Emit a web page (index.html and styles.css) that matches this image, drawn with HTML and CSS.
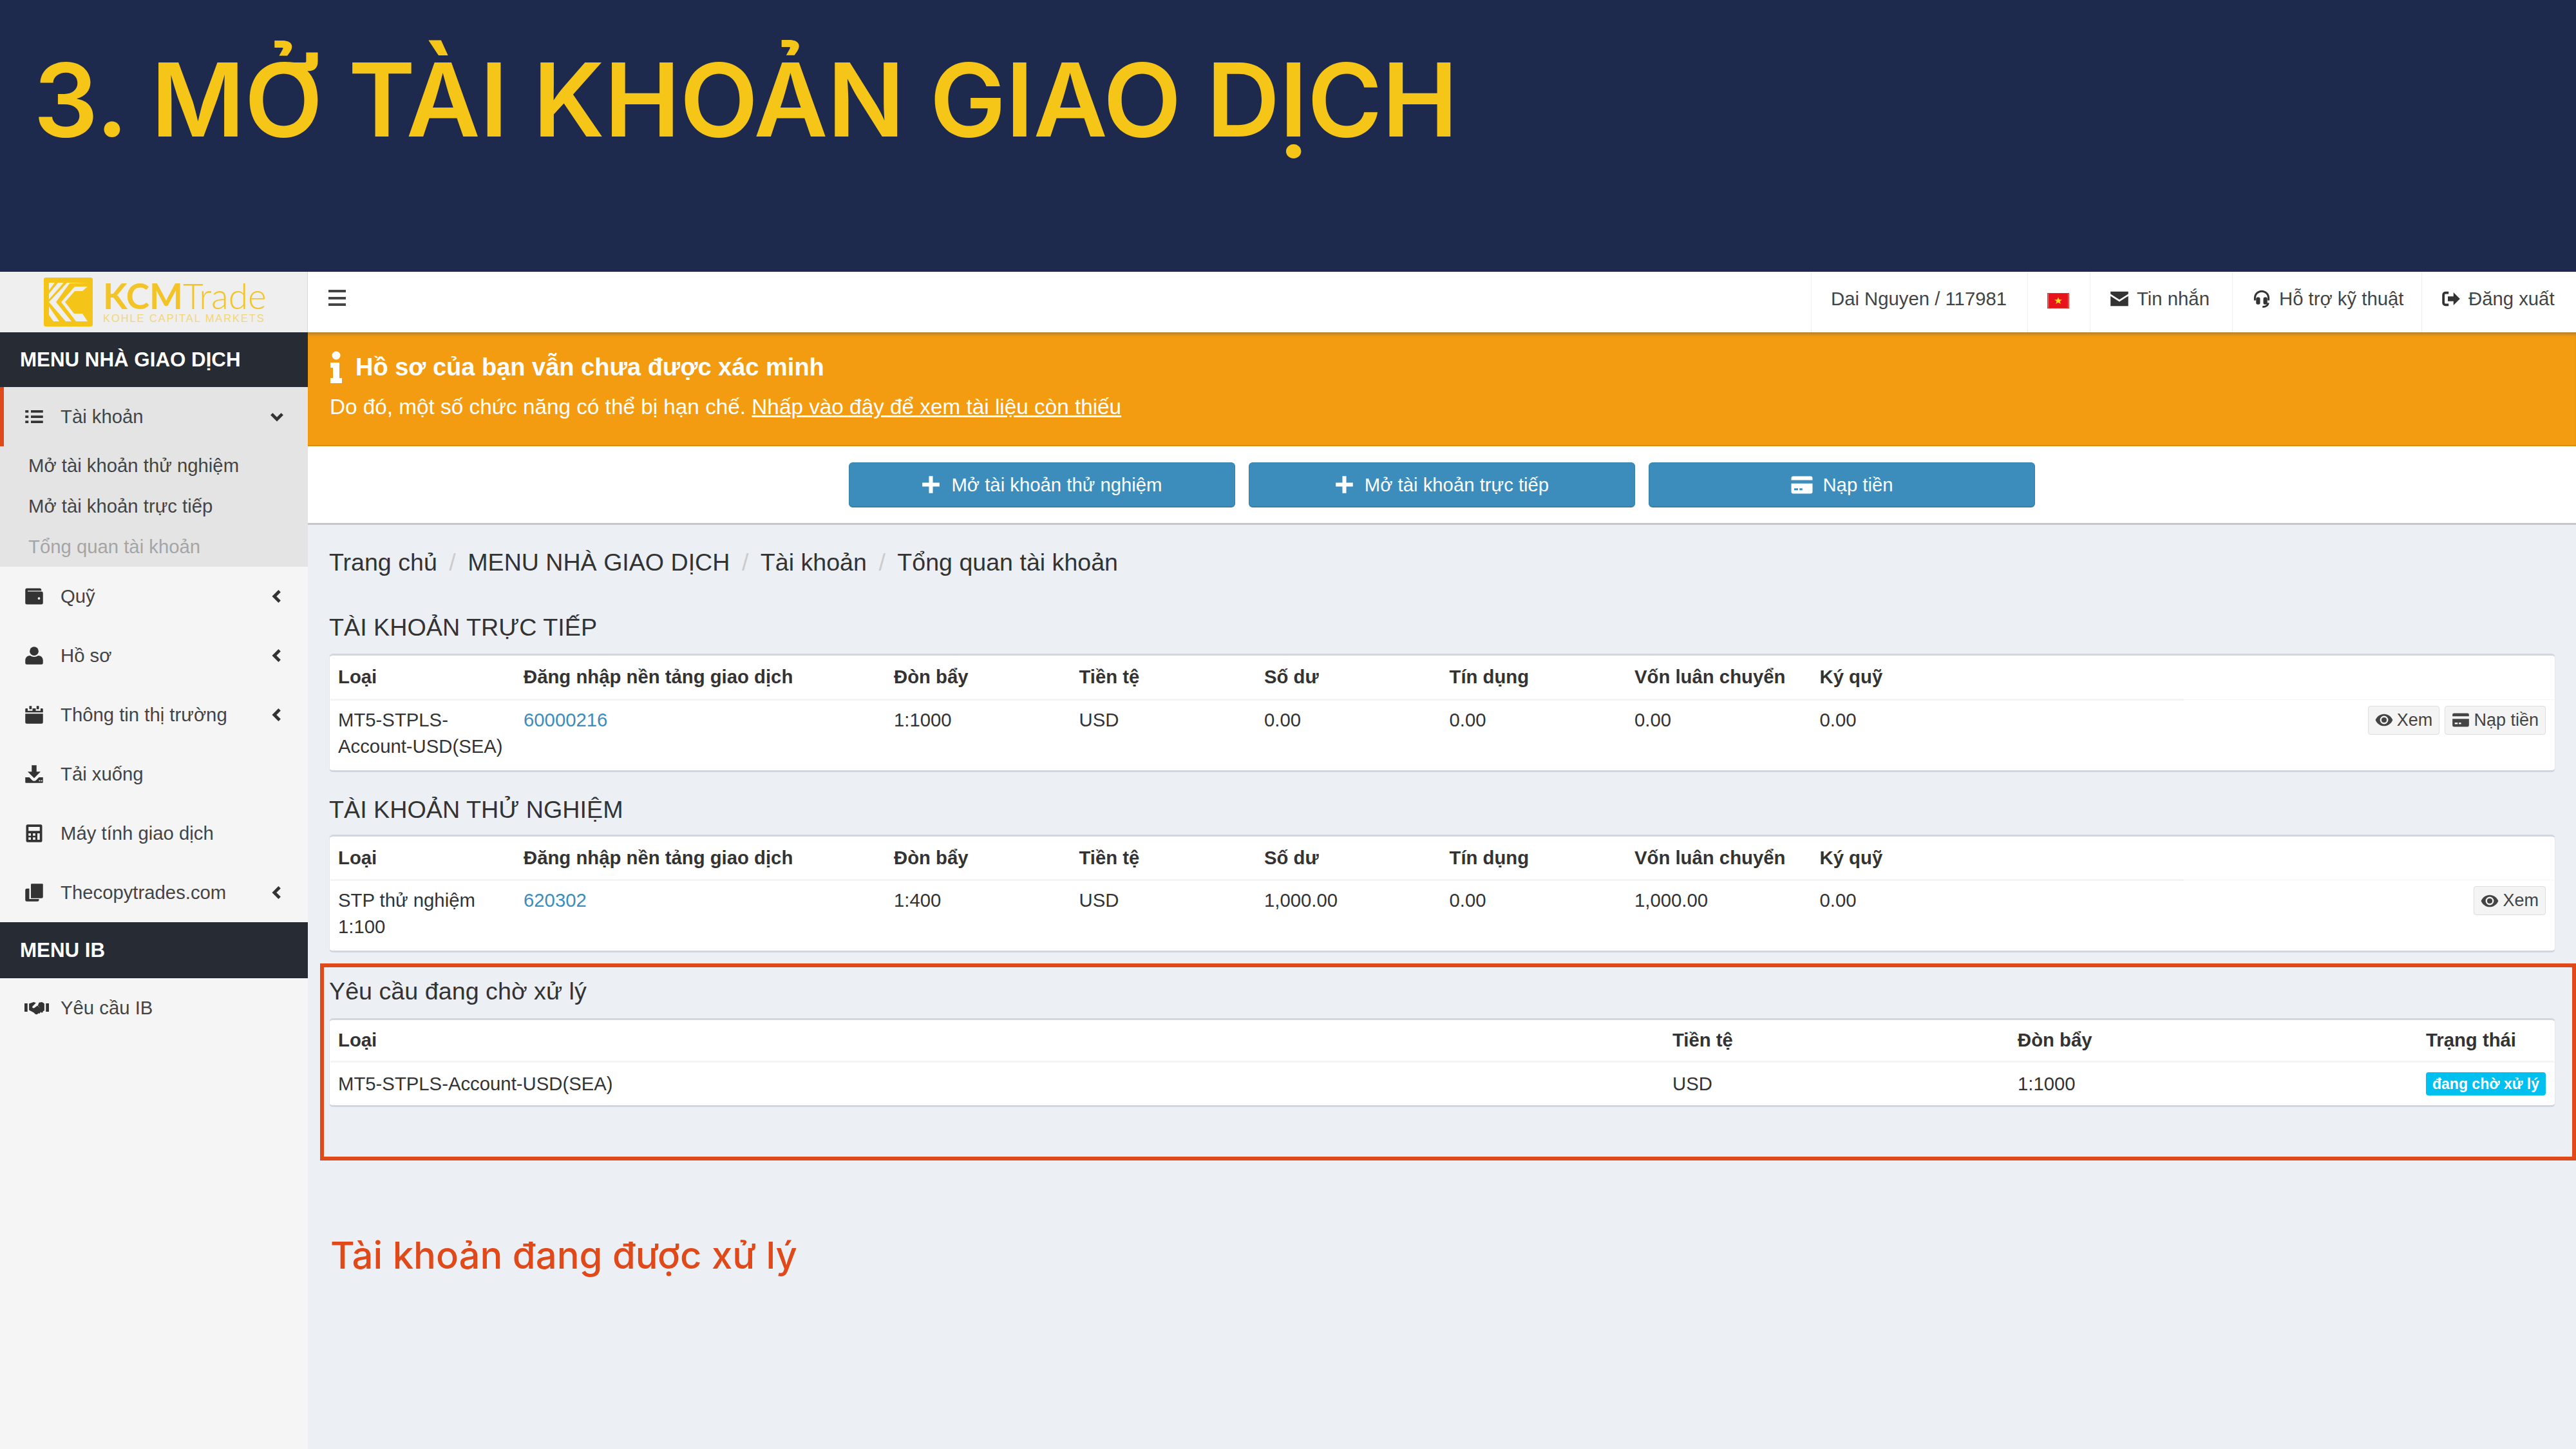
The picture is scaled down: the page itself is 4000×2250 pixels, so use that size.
FILE: index.html
```html
<!DOCTYPE html>
<html lang="vi">
<head>
    <meta charset="utf-8">
    <title>Mở tài khoản giao dịch</title>
    <link rel="stylesheet" href="styles.css">
</head>
<body>
    <svg class="icon-defs" aria-hidden="true">
        <symbol id="i-list" viewBox="0 0 24 24"><path d="M1 4h4v3H1zM8 4h15v3H8zM1 10.500h4v3H1zM8 10.500h15v3H8zM1 17h4v3H1zM8 17h15v3H8z"/></symbol>
        <symbol id="i-wallet" viewBox="0 0 24 24"><path fill-rule="evenodd" d="M3 2h16a2 2 0 0 1 2 2v1H4v1h17a2 2 0 0 1 2 2v12a2 2 0 0 1-2 2H3a2 2 0 0 1-2-2V4a2 2 0 0 1 2-2zm15 11a1.500 1.500 0 1 0 0 3 1.500 1.500 0 0 0 0-3z"/></symbol>
        <symbol id="i-user" viewBox="0 0 24 24"><circle cx="12" cy="6.500" r="5.500"/><path d="M3 23a2 2 0 0 1-2-2v-3c0-3.500 2.500-6 6-6 1.500 1 3 1.500 5 1.500s3.500-.5 5-1.500c3.500 0 6 2.500 6 6v3a2 2 0 0 1-2 2z"/></symbol>
        <symbol id="i-calendar" viewBox="0 0 24 24"><path d="M6 1h3v4H6zM15 1h3v4h-3zM2 4h2v3h6V4h4v3h6V4h2a1 1 0 0 1 1 1v4H1V5a1 1 0 0 1 1-1zM1 10.500h22V21a2 2 0 0 1-2 2H3a2 2 0 0 1-2-2z"/></symbol>
        <symbol id="i-download" viewBox="0 0 24 24"><path d="M9 1h6v8h5l-8 8-8-8h5z"/><path fill-rule="evenodd" d="M1 16h5l3.500 3.500a3.500 3.500 0 0 0 5 0L18 16h5v6a1 1 0 0 1-1 1H2a1 1 0 0 1-1-1zm17 3.500v1.500h1.500v-1.500zm2.500 0v1.500H22v-1.500z"/></symbol>
        <symbol id="i-calc" viewBox="0 0 24 24"><path fill-rule="evenodd" d="M4 1h16a2 2 0 0 1 2 2v18a2 2 0 0 1-2 2H4a2 2 0 0 1-2-2V3a2 2 0 0 1 2-2zm1 3v5h14V4zm0 8v3h3v-3zm5.500 0v3h3v-3zm5.500 0v8h3v-8zM5 17v3h3v-3zm5.500 0v3h3v-3z"/></symbol>
        <symbol id="i-copy" viewBox="0 0 24 24"><path d="M8 2a1 1 0 0 1 1-1h13a1 1 0 0 1 1 1v15a2 2 0 0 1-2 2H8z"/><path d="M1 9a2 2 0 0 1 2-2h3v13h12v1a2 2 0 0 1-2 2H3a2 2 0 0 1-2-2z"/></symbol>
        <symbol id="i-handshake" viewBox="0 0 32 24"><path d="M0 6h4v11H0zM28 6h4v11h-4zM6 6.500l6-2 3 1-4.500 4.500c-1 1.500 1 3 2.500 2l4-3 7 7c1 1.500-1 3-2 2l-1-1c0 2-2 3-3 2-1 2-3 2-4 1l-2-2-6-3zM19 5l4-.5 3 2v9l-2 1-6.500-7.500z"/></symbol>
        <symbol id="i-envelope" viewBox="0 0 24 24"><path d="M1 3h22v3L12 13 1 6zM1 8.500l11 7 11-7V21H1z"/></symbol>
        <symbol id="i-headset" viewBox="0 0 24 24"><path fill="none" stroke="currentColor" stroke-width="2.400" d="M3.500 14v-3a8.500 8.500 0 0 1 17 0v3M20 17c0 3-3 5-7 5"/><rect x="5" y="10" width="5" height="9" rx="2"/><rect x="14" y="10" width="5" height="9" rx="2"/></symbol>
        <symbol id="i-signout" viewBox="0 0 24 24"><path d="M9 3v3H5a1 1 0 0 0-1 1v10a1 1 0 0 0 1 1h4v3H5a4 4 0 0 1-4-4V7a4 4 0 0 1 4-4z"/><path d="M8 9h7V4l8 8-8 8v-5H8z"/></symbol>
        <symbol id="i-plus" viewBox="0 0 24 24"><path d="M9.500 1h5v8.500H23v5h-8.500V23h-5v-8.500H1v-5h8.500z"/></symbol>
        <symbol id="i-card" viewBox="0 0 24 24"><path fill-rule="evenodd" d="M3 3h18a2 2 0 0 1 2 2v2H1V5a2 2 0 0 1 2-2zM1 10.500h22V19a2 2 0 0 1-2 2H3a2 2 0 0 1-2-2zm3 5v2h4v-2zm5.500 0v2h3v-2z"/></symbol>
        <symbol id="i-eye" viewBox="0 0 24 24"><path fill-rule="evenodd" d="M12 4c5 0 9.500 3 11.500 8-2 5-6.500 8-11.500 8S2.500 17 .5 12C2.500 7 7 4 12 4zm0 2.500a5.500 5.500 0 1 0 0 11 5.500 5.500 0 0 0 0-11z"/><circle cx="12" cy="12" r="3.500"/></symbol>
    </svg>

    <header class="slide-head">
        <h1>3. MỞ TÀI KHOẢN GIAO DỊCH</h1>
    </header>

    <div class="app">
        <aside class="sidebar">
            <div class="logo-bar">
                <svg class="logo-mark" viewBox="0 0 76 76">
                    <rect width="76" height="76" rx="3" fill="#f4c518"/>
                    <path d="M8 8h9L8 20zM22 8h9L8 34v-9zM36 8h32L40 9 19 38l24 30H34L8 38zM48 14h20l-8 7H48L33 38l14 18h13l8 12H50L27 38z" fill="#efefef"/>
                    <path d="M8 45l16 23h-9L8 58z" fill="#efefef"/>
                </svg>
                <div class="logo-text">
                    <div class="logo-name"><b>KCM</b>Trade</div>
                    <div class="logo-sub">KOHLE CAPITAL MARKETS</div>
                </div>
            </div>

            <div class="menu-head">MENU NHÀ GIAO DỊCH</div>
            <div class="menu-group">
                <a class="menu-item is-active">
                    <svg class="menu-icon"><use href="#i-list"/></svg>
                    <span class="menu-label">Tài khoản</span>
                    <svg class="chev" viewBox="0 0 16 16"><path d="M2 5l6 6 6-6"/></svg>
                </a>
                <a class="sub-item">Mở tài khoản thử nghiệm</a>
                <a class="sub-item">Mở tài khoản trực tiếp</a>
                <a class="sub-item is-current">Tổng quan tài khoản</a>
            </div>
            <a class="menu-item">
                <svg class="menu-icon"><use href="#i-wallet"/></svg>
                <span class="menu-label">Quỹ</span>
                <svg class="chev" viewBox="0 0 16 16"><path d="M11 2L5 8l6 6"/></svg>
            </a>
            <a class="menu-item">
                <svg class="menu-icon"><use href="#i-user"/></svg>
                <span class="menu-label">Hồ sơ</span>
                <svg class="chev" viewBox="0 0 16 16"><path d="M11 2L5 8l6 6"/></svg>
            </a>
            <a class="menu-item">
                <svg class="menu-icon"><use href="#i-calendar"/></svg>
                <span class="menu-label">Thông tin thị trường</span>
                <svg class="chev" viewBox="0 0 16 16"><path d="M11 2L5 8l6 6"/></svg>
            </a>
            <a class="menu-item">
                <svg class="menu-icon"><use href="#i-download"/></svg>
                <span class="menu-label">Tải xuống</span>
            </a>
            <a class="menu-item">
                <svg class="menu-icon"><use href="#i-calc"/></svg>
                <span class="menu-label">Máy tính giao dịch</span>
            </a>
            <a class="menu-item">
                <svg class="menu-icon"><use href="#i-copy"/></svg>
                <span class="menu-label">Thecopytrades.com</span>
                <svg class="chev" viewBox="0 0 16 16"><path d="M11 2L5 8l6 6"/></svg>
            </a>
            <div class="menu-head menu-head-ib">MENU IB</div>
            <a class="menu-item">
                <svg class="menu-icon menu-icon-wide"><use href="#i-handshake"/></svg>
                <span class="menu-label">Yêu cầu IB</span>
            </a>
        </aside>

        <main class="main">
            <nav class="topbar">
                <div class="burger"><i></i><i></i><i></i></div>
                <div class="top-cell cell-user">Dai Nguyen / 117981</div>
                <div class="top-cell cell-flag">
                    <svg class="flag" viewBox="0 0 34 24">
                        <rect width="34" height="24" fill="#e8141c"/>
                        <path d="M17 6l1.800 4.200h4.600l-3.700 2.800 1.400 4.500-4.100-2.700-4.100 2.700 1.400-4.500-3.700-2.800h4.600z" fill="#f7e214"/>
                    </svg>
                </div>
                <div class="top-cell cell-msg"><svg class="top-icon"><use href="#i-envelope"/></svg>Tin nhắn</div>
                <div class="top-cell cell-help"><svg class="top-icon"><use href="#i-headset"/></svg>Hỗ trợ kỹ thuật</div>
                <div class="top-cell cell-out"><svg class="top-icon"><use href="#i-signout"/></svg>Đăng xuất</div>
            </nav>

            <section class="alert">
                <h4>
                    <svg class="alert-icon" viewBox="0 0 20 50"><circle cx="10" cy="7" r="6.500"/><path d="M1 18h14v24h4v8H1v-8h4V26H1z"/></svg>
                    Hồ sơ của bạn vẫn chưa được xác minh
                </h4>
                <p>Do đó, một số chức năng có thể bị hạn chế. <a>Nhấp vào đây để xem tài liệu còn thiếu</a></p>
            </section>

            <div class="action-bar">
                <a class="btn-primary"><svg class="btn-icon"><use href="#i-plus"/></svg>Mở tài khoản thử nghiệm</a>
                <a class="btn-primary"><svg class="btn-icon"><use href="#i-plus"/></svg>Mở tài khoản trực tiếp</a>
                <a class="btn-primary"><svg class="btn-icon btn-icon-card"><use href="#i-card"/></svg>Nạp tiền</a>
            </div>

            <div class="content">
                <ol class="crumbs">
                    <li>Trang chủ</li>
                    <li>MENU NHÀ GIAO DỊCH</li>
                    <li>Tài khoản</li>
                    <li>Tổng quan tài khoản</li>
                </ol>

                <h3 class="section-title">TÀI KHOẢN TRỰC TIẾP</h3>
                <div class="box">
                    <table class="acc-table">
                        <thead>
                            <tr>
                                <th class="col-type">Loại</th>
                                <th class="col-login">Đăng nhập nền tảng giao dịch</th>
                                <th class="col-num">Đòn bẩy</th>
                                <th class="col-num">Tiền tệ</th>
                                <th class="col-num">Số dư</th>
                                <th class="col-num">Tín dụng</th>
                                <th class="col-num">Vốn luân chuyển</th>
                                <th class="col-num">Ký quỹ</th>
                                <th class="col-gap"></th>
                                <th class="col-actions"></th>
                            </tr>
                        </thead>
                        <tbody>
                            <tr>
                                <td>MT5-STPLS-<br>Account-USD(SEA)</td>
                                <td><a class="acc-link">60000216</a></td>
                                <td>1:1000</td>
                                <td>USD</td>
                                <td>0.00</td>
                                <td>0.00</td>
                                <td>0.00</td>
                                <td>0.00</td>
                                <td></td>
                                <td class="cell-actions">
                                    <a class="btn-small"><svg class="small-icon"><use href="#i-eye"/></svg>Xem</a>
                                    <a class="btn-small"><svg class="small-icon"><use href="#i-card"/></svg>Nạp tiền</a>
                                </td>
                            </tr>
                        </tbody>
                    </table>
                </div>

                <h3 class="section-title section-title-demo">TÀI KHOẢN THỬ NGHIỆM</h3>
                <div class="box">
                    <table class="acc-table">
                        <thead>
                            <tr>
                                <th class="col-type">Loại</th>
                                <th class="col-login">Đăng nhập nền tảng giao dịch</th>
                                <th class="col-num">Đòn bẩy</th>
                                <th class="col-num">Tiền tệ</th>
                                <th class="col-num">Số dư</th>
                                <th class="col-num">Tín dụng</th>
                                <th class="col-num">Vốn luân chuyển</th>
                                <th class="col-num">Ký quỹ</th>
                                <th class="col-gap"></th>
                                <th class="col-actions"></th>
                            </tr>
                        </thead>
                        <tbody>
                            <tr>
                                <td>STP thử nghiệm<br>1:100</td>
                                <td><a class="acc-link">620302</a></td>
                                <td>1:400</td>
                                <td>USD</td>
                                <td>1,000.00</td>
                                <td>0.00</td>
                                <td>1,000.00</td>
                                <td>0.00</td>
                                <td></td>
                                <td class="cell-actions">
                                    <a class="btn-small"><svg class="small-icon"><use href="#i-eye"/></svg>Xem</a>
                                </td>
                            </tr>
                        </tbody>
                    </table>
                </div>

                <section class="pending">
                    <h3 class="pending-title">Yêu cầu đang chờ xử lý</h3>
                    <div class="box">
                        <table class="pending-table">
                            <thead>
                                <tr>
                                    <th class="p-type">Loại</th>
                                    <th class="p-cur">Tiền tệ</th>
                                    <th class="p-lev">Đòn bẩy</th>
                                    <th class="p-status">Trạng thái</th>
                                </tr>
                            </thead>
                            <tbody>
                                <tr>
                                    <td>MT5-STPLS-Account-USD(SEA)</td>
                                    <td>USD</td>
                                    <td>1:1000</td>
                                    <td><span class="badge">đang chờ xử lý</span></td>
                                </tr>
                            </tbody>
                        </table>
                    </div>
                </section>

                <p class="note">Tài khoản đang được xử lý</p>
            </div>
        </main>
    </div>
</body>
</html>
```

FILE: styles.css
```css
*{
    box-sizing: border-box;
}
body{
    margin: 0;
    width: 4000px;
    height: 2250px;
    overflow: hidden;
    background: #ecf0f5;
    color: #333;
    font-family: "Liberation Sans", Arial, sans-serif;
    font-size: 29.300px;
}
.icon-defs{
    position: absolute;
    width: 0;
    height: 0;
}

/* slide title */
.slide-head{
    height: 422px;
    background: #1e2a4d;
    padding: 50px 0 0 52px;
}
.slide-head h1{
    margin: 0;
    font-family: Inter, "Noto Sans", sans-serif;
    font-size: 158px;
    font-weight: 600;
    letter-spacing: -0.500px;
    line-height: 210px;
    color: #f5c518;
    white-space: nowrap;
}

.app{
    display: flex;
    height: 1828px;
}

/* sidebar */
.sidebar{
    width: 478px;
    flex: none;
    background: #f5f5f5;
    color: #444;
}
.logo-bar{
    height: 94px;
    background: #efefef;
    display: flex;
    align-items: center;
    padding-left: 68px;
    gap: 16px;
    border-right: 1px solid #d8d8d8;
}
.logo-mark{
    width: 76px;
    height: 76px;
    flex: none;
}
.logo-text{
    width: 252px;
    color: #f4c73a;
}
.logo-name{
    font-family: Lato, "Noto Sans", sans-serif;
    font-size: 55px;
    line-height: 50px;
    font-weight: 300;
    color: #f3c428;
    white-space: nowrap;
}
.logo-name b{
    font-weight: 700;
}
.logo-sub{
    font-size: 16.500px;
    line-height: 20px;
    letter-spacing: 1.900px;
    color: #f3d675;
    white-space: nowrap;
}
.menu-head{
    height: 85px;
    background: #262b34;
    color: #fff;
    font-weight: bold;
    font-size: 31.300px;
    line-height: 85px;
    padding-left: 31px;
}
.menu-head-ib{
    height: 87px;
    line-height: 87px;
}
.menu-group{
    background: #e4e4e4;
    height: 279px;
}
.menu-item{
    display: flex;
    align-items: center;
    height: 92px;
    padding-left: 38px;
    color: #444;
}
.menu-item.is-active{
    border-left: 6px solid #e04a1a;
    padding-left: 32px;
}
.menu-icon{
    width: 30px;
    height: 30px;
    fill: #333;
    flex: none;
}
.menu-icon-wide{
    width: 38px;
}
.menu-label{
    margin-left: 26px;
    flex: 1;
    white-space: nowrap;
}
.menu-icon-wide + .menu-label{
    margin-left: 18px;
}
.chev{
    width: 22px;
    height: 22px;
    margin-right: 37px;
    fill: none;
    stroke: #333;
    stroke-width: 3.500;
    flex: none;
}
.sub-item{
    display: block;
    height: 63px;
    line-height: 63px;
    padding-left: 44px;
    color: #444;
    margin-top: 0;
}
.menu-item.is-active + .sub-item{
    margin-top: -2px;
}
.sub-item.is-current{
    color: #a5a5a5;
}

/* top bar */
.main{
    flex: 1;
    min-width: 0;
}
.topbar{
    height: 94px;
    background: #fff;
    display: flex;
    align-items: stretch;
    padding-left: 32px;
}
.burger{
    width: 27px;
    height: 25px;
    margin-top: 28px;
    margin-right: auto;
    display: flex;
    flex-direction: column;
    justify-content: space-between;
}
.burger i{
    display: block;
    height: 4px;
    background: #444;
}
.top-cell{
    display: flex;
    align-items: flex-start;
    padding-top: 24px;
    line-height: 36px;
    padding-left: 30px;
    border-left: 1px solid #eee;
    color: #444;
    white-space: nowrap;
}
.cell-user{
    width: 336px;
}
.cell-flag{
    width: 97px;
}
.cell-msg{
    width: 221px;
}
.cell-help{
    width: 294px;
}
.cell-out{
    width: 240px;
}
.flag{
    width: 34px;
    height: 24px;
    margin-top: 9px;
    border: 1px solid #d8342a;
}
.top-icon{
    width: 30px;
    height: 30px;
    margin: 3px 12px 0 0;
    fill: #333;
    color: #333;
    flex: none;
}

/* alert */
.alert{
    height: 177px;
    background: #f39c12;
    color: #fff;
    padding: 28px 0 0 34px;
    box-shadow: inset 0 6px 5px -3px rgba(90, 90, 90, .45), inset 0 -2px 0 #d08f1f;
}
.alert h4{
    display: flex;
    align-items: center;
    margin: 0;
    font-size: 38px;
    line-height: 52px;
    font-weight: bold;
}
.alert-icon{
    width: 20px;
    height: 50px;
    fill: #fff;
    margin-right: 20px;
}
.alert p{
    margin: 16px 0 0;
    font-size: 33.300px;
    line-height: 40px;
}
.alert a{
    text-decoration: underline;
}

/* action buttons */
.action-bar{
    height: 122px;
    background: #fff;
    border-bottom: 3px solid #c4c6c9;
    display: flex;
    justify-content: center;
    gap: 21px;
    padding-top: 25px;
}
.btn-primary{
    width: 600px;
    height: 70px;
    background: #3c8dbc;
    border: 1px solid #367fa9;
    border-bottom-width: 2px;
    border-radius: 6px;
    color: #fff;
    display: flex;
    align-items: center;
    justify-content: center;
}
.btn-icon{
    width: 29px;
    height: 29px;
    fill: #fff;
    margin-right: 17px;
}
.btn-icon-card{
    width: 36px;
    height: 36px;
    margin-right: 14px;
}

/* content */
.content{
    padding: 35px 32px 0 33px;
}
.crumbs{
    display: flex;
    margin: 0;
    padding: 0;
    list-style: none;
    font-size: 37.600px;
    line-height: 46px;
}
.crumbs li + li::before{
    content: "/";
    color: #ccc;
    padding: 0 18.500px;
}
.section-title{
    margin: 55px 0 18px;
    font-size: 37.700px;
    line-height: 46px;
    font-weight: normal;
}
.section-title-demo{
    margin: 35px 0 16px;
}
.box{
    background: #fff;
    border: 1px solid #e2e5ea;
    border-top: 3px solid #d2d6de;
    border-bottom: 3px solid #d2d6de;
    border-radius: 6px;
    padding: 0 1px;
}
.acc-table,
.pending-table{
    width: 100%;
    border-collapse: collapse;
    table-layout: fixed;
    font-size: 29.300px;
}
th{
    text-align: left;
    font-weight: bold;
    color: #333;
    white-space: nowrap;
    padding: 0 0 0 12px;
}
td{
    vertical-align: top;
    padding: 9px 0 17px 12px;
    line-height: 41px;
}
.acc-table thead tr{
    height: 68px;
}
.acc-table th{
    border-bottom: 3px solid #f4f4f4;
}
.acc-table th.col-actions{
    border-bottom: 1px solid #f4f4f4;
}
.col-type{
    width: 288px;
}
.col-login{
    width: 575px;
}
.col-num{
    width: 287.500px;
}
.col-gap{
    width: 290px;
}
.acc-link{
    color: #3c8dbc;
}
.cell-actions{
    text-align: right;
    padding-right: 13px;
    white-space: nowrap;
}
.btn-small{
    display: inline-flex;
    align-items: center;
    height: 45px;
    padding: 0 10px;
    background: #f4f4f4;
    border: 1px solid #ddd;
    border-radius: 4px;
    color: #444;
    font-size: 27px;
}
.small-icon{
    width: 28px;
    height: 28px;
    margin-right: 6px;
    fill: #444;
}

/* pending box */
.pending{
    height: 306px;
    margin: 17px -32px 0 -14px;
    border: 6px solid #e04a1a;
    padding: 14px 26px 0 8px;
}
.pending-title{
    margin: 0 0 19px;
    font-size: 37.700px;
    line-height: 46px;
    font-weight: normal;
}
.pending-table thead tr{
    height: 64px;
}
.pending-table th{
    border-bottom: 3px solid #f4f4f4;
}
.pending-table td{
    padding: 13px 0 13px 12px;
    line-height: 40px;
}
.p-type{
    width: 2072px;
}
.p-cur{
    width: 536px;
}
.p-lev{
    width: 634px;
}
.badge{
    display: block;
    width: 186px;
    height: 36px;
    margin-top: 2px;
    background: #00c0ef;
    color: #fff;
    border-radius: 4px;
    font-size: 23px;
    font-weight: bold;
    line-height: 36px;
    text-align: center;
    white-space: nowrap;
}

/* annotation under the box */
.note{
    margin: 112px 0 0 2px;
    font-family: Inter, "Noto Sans", sans-serif;
    font-size: 58px;
    font-weight: 500;
    line-height: 70px;
    color: #e04a1a;
}
```
